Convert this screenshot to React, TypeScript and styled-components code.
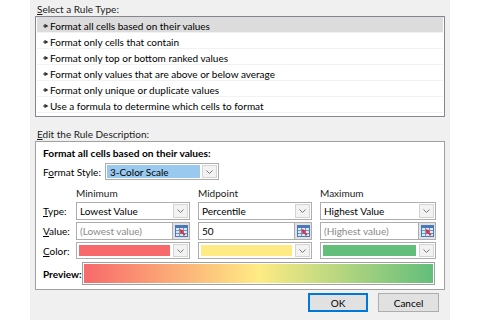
import React from "react";
import styled, { createGlobalStyle } from "styled-components";

const GlobalStyle = createGlobalStyle`
  html, body { margin: 0; padding: 0; background: #fff; }
  body {
    font-family: Lato, "Noto Sans", sans-serif;
    font-size: 10px;
    color: #000;
  }
`;

const Dialog = styled.div`
  margin-left: 30px;
  width: 420px;
  height: 320px;
  background: #f0f0f0;
  box-sizing: border-box;
  padding: 3px 5px 0 5px;
  display: flex;
  flex-direction: column;
`;

const SectionLabel = styled.div<{ $top?: number }>`
  margin-top: ${(p) => p.$top ?? 0}px;
  padding-left: 2px;
  height: 13px;
  line-height: 13px;
  color: #1a1a1a;
  white-space: nowrap;
`;

const U = styled.span`
  text-decoration: underline;
  text-underline-offset: 1px;
`;

const ListBox = styled.div`
  box-sizing: border-box;
  height: 101px;
  border: 1px solid #828790;
  background: #fff;
  padding: 0 1px;
`;

const RuleRow = styled.div<{ $selected?: boolean }>`
  box-sizing: border-box;
  height: 16px;
  display: flex;
  align-items: center;
  gap: 1px;
  padding: 2px 0 0 6px;
  border-bottom: 1px solid #f2f2f2;
  background: ${(p) => (p.$selected ? "#dcdcdc" : "#fff")};
  white-space: nowrap;
`;

const EditBox = styled.div`
  box-sizing: border-box;
  height: 149px;
  border: 1px solid #a0a0a0;
  background: #fff;
  padding: 4px 9px 0 7px;
  display: flex;
  flex-direction: column;
`;

const Title = styled.div`
  font-weight: 700;
  height: 14px;
  line-height: 14px;
  white-space: nowrap;
  font-size: 10.2px;
`;

const StyleRow = styled.div`
  margin-top: 3px;
  height: 17px;
  display: flex;
  align-items: center;
`;

const StyleLabel = styled.div`
  width: 62px;
  white-space: nowrap;
`;

const Combo = styled.div<{ $w?: number }>`
  box-sizing: border-box;
  ${(p) => (p.$w ? `width: ${p.$w}px;` : "")}
  height: 100%;
  border: 1px solid #adadad;
  background: #fff;
  display: flex;
  align-items: stretch;
`;

const ComboText = styled.div<{ $hl?: boolean; $muted?: boolean }>`
  flex: 1;
  display: flex;
  align-items: center;
  padding-left: 3px;
  margin: ${(p) => (p.$hl ? "1px" : "0")};
  background: ${(p) => (p.$hl ? "#99c9ef" : "transparent")};
  color: ${(p) => (p.$muted ? "#8a8a8a" : "#000")};
  white-space: nowrap;
  overflow: hidden;
`;

const Swatch = styled.div<{ $c: string }>`
  flex: 1;
  margin: 2px;
  background: ${(p) => p.$c};
`;

const SideBtn = styled.div`
  box-sizing: border-box;
  width: 15px;
  margin: 1px;
  border: 1px solid #d4d4d4;
  background: #f2f2f2;
  display: flex;
  align-items: center;
  justify-content: center;
`;

const PickBtn = styled.div`
  box-sizing: border-box;
  width: 17px;
  border: 1px solid #adadad;
  border-left: none;
  background: #e1e1e1;
  display: flex;
  align-items: center;
  justify-content: center;
`;

const InputWrap = styled.div`
  display: flex;
  height: 100%;
`;

const Grid = styled.div`
  margin-top: 6px;
  display: grid;
  grid-template-columns: 25px 114px 114px 116px;
  grid-template-rows: 14px 18px 18px 17px;
  column-gap: 8px;
  row-gap: 2px;
  align-items: center;
`;

const ColHead = styled.div`
  line-height: 14px;
  color: #1a1a1a;
`;

const RowLabel = styled.div`
  white-space: nowrap;
`;

const PreviewRow = styled.div`
  margin-top: 3px;
  height: 23px;
  display: flex;
  align-items: center;
`;

const PreviewLabel = styled.div`
  width: 39px;
  font-weight: 700;
  white-space: nowrap;
`;

const PreviewBar = styled.div`
  box-sizing: border-box;
  flex: 1;
  height: 100%;
  border: 1px solid #a0a0a0;
  padding: 1px;
  background: #fff;
`;

const Gradient = styled.div`
  height: 100%;
  background: linear-gradient(to right, #f8696b 0%, #ffeb84 50%, #63be7b 100%);
`;

const Buttons = styled.div`
  margin-top: 3px;
  margin-right: 6px;
  display: flex;
  justify-content: flex-end;
  gap: 10px;
`;

const Btn = styled.div<{ $w: number; $default?: boolean }>`
  box-sizing: border-box;
  width: ${(p) => p.$w}px;
  height: 19px;
  background: #e1e1e1;
  border: ${(p) => (p.$default ? "2px solid #0078d7" : "1px solid #adadad")};
  display: flex;
  align-items: center;
  justify-content: center;
`;

const Arrow = () => (
  <svg width="6" height="6" viewBox="0 0 6 6">
    <rect x="0" y="2.5" width="2.5" height="1" fill="#333" />
    <path d="M1.5 0.8 L5.5 3 L1.5 5.2 Z" fill="#333" />
  </svg>
);

const Chevron = () => (
  <svg width="7" height="4" viewBox="0 0 7 4">
    <path d="M0.5 0.5 L3.5 3.5 L6.5 0.5" fill="none" stroke="#777" strokeWidth="1" />
  </svg>
);

const RangeIcon = () => (
  <svg width="13" height="12" viewBox="0 0 13 12">
    <rect x="0.5" y="0.5" width="12" height="11" fill="#dbe8f7" stroke="#4a78b8" />
    <rect x="1" y="1" width="11" height="2" fill="#4a78b8" />
    <path d="M1 5.5 H12 M1 8.5 H12 M4.5 3 V11.5 M8.5 3 V11.5" stroke="#6f95c9" strokeWidth="1" />
    <path d="M5 4 L9 6 L7.5 7 L10.5 9.5 L9.5 10.5 L6.5 8 L5.5 9.5 Z" fill="#e0262b" />
  </svg>
);

const rules = [
  "Format all cells based on their values",
  "Format only cells that contain",
  "Format only top or bottom ranked values",
  "Format only values that are above or below average",
  "Format only unique or duplicate values",
  "Use a formula to determine which cells to format",
];

const cols = [
  { head: "Minimum", type: "Lowest Value", value: "(Lowest value)", muted: true, color: "#f8696b" },
  { head: "Midpoint", type: "Percentile", value: "50", muted: false, color: "#ffeb84" },
  { head: "Maximum", type: "Highest Value", value: "(Highest value)", muted: true, color: "#63be7b" },
];

export default function App() {
  return (
    <>
      <GlobalStyle />
      <Dialog>
        <SectionLabel>
          <U>S</U>elect a Rule Type:
        </SectionLabel>
        <ListBox>
          {rules.map((r, i) => (
            <RuleRow key={r} $selected={i === 0}>
              <Arrow />
              <span>{r}</span>
            </RuleRow>
          ))}
        </ListBox>
        <SectionLabel $top={11}>
          <U>E</U>dit the Rule Description:
        </SectionLabel>
        <EditBox>
          <Title>Format all cells based on their values:</Title>
          <StyleRow>
            <StyleLabel>
              F<U>o</U>rmat Style:
            </StyleLabel>
            <Combo $w={114}>
              <ComboText $hl>3-Color Scale</ComboText>
              <SideBtn>
                <Chevron />
              </SideBtn>
            </Combo>
          </StyleRow>
          <Grid>
            <div />
            {cols.map((c) => (
              <ColHead key={c.head}>{c.head}</ColHead>
            ))}
            <RowLabel>
              <U>T</U>ype:
            </RowLabel>
            {cols.map((c) => (
              <Combo key={c.head + "t"}>
                <ComboText>{c.type}</ComboText>
                <SideBtn>
                  <Chevron />
                </SideBtn>
              </Combo>
            ))}
            <RowLabel>
              <U>V</U>alue:
            </RowLabel>
            {cols.map((c) => (
              <InputWrap key={c.head + "v"}>
                <Combo style={{ flex: 1 }}>
                  <ComboText $muted={c.muted}>{c.value}</ComboText>
                </Combo>
                <PickBtn>
                  <RangeIcon />
                </PickBtn>
              </InputWrap>
            ))}
            <RowLabel>
              <U>C</U>olor:
            </RowLabel>
            {cols.map((c) => (
              <Combo key={c.head + "c"}>
                <Swatch $c={c.color} />
                <SideBtn>
                  <Chevron />
                </SideBtn>
              </Combo>
            ))}
          </Grid>
          <PreviewRow>
            <PreviewLabel>Preview:</PreviewLabel>
            <PreviewBar>
              <Gradient />
            </PreviewBar>
          </PreviewRow>
        </EditBox>
        <Buttons>
          <Btn $w={60} $default>
            OK
          </Btn>
          <Btn $w={61}>Cancel</Btn>
        </Buttons>
      </Dialog>
    </>
  );
}
